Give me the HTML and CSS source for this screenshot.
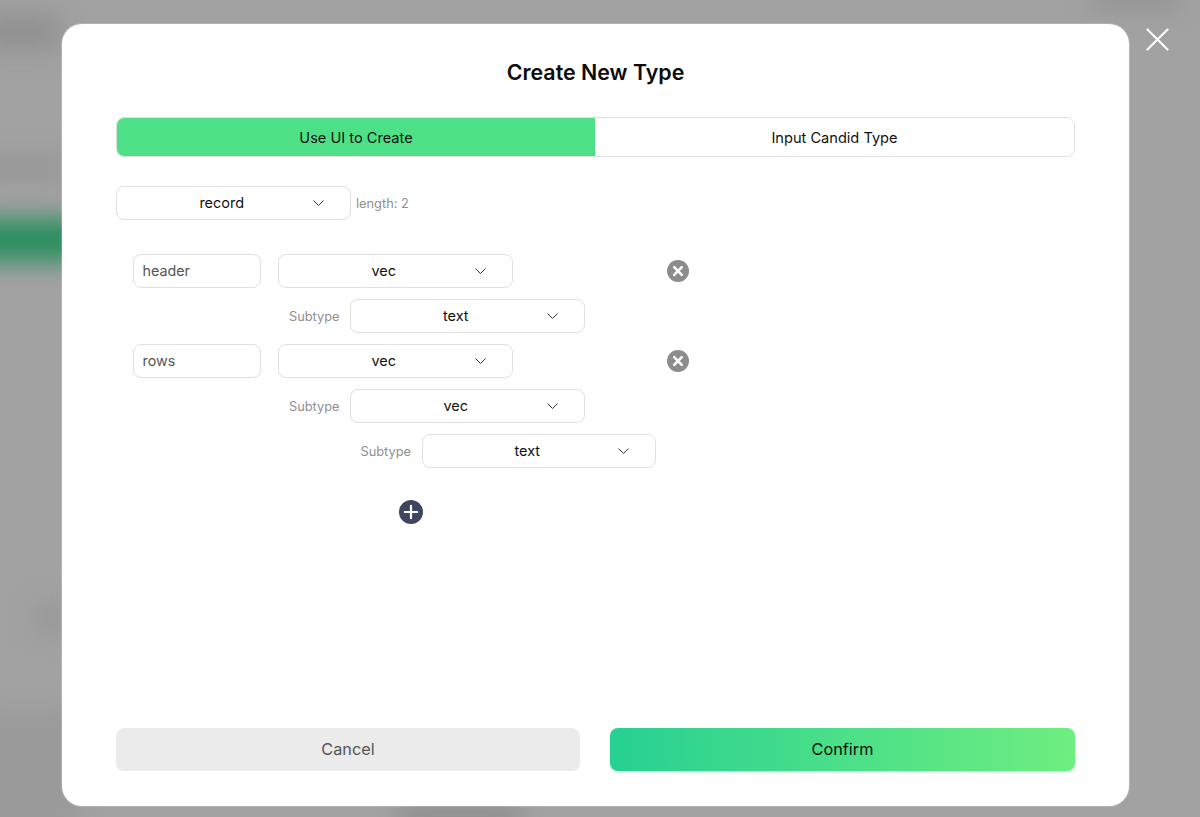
FILE: index.html
```html
<!DOCTYPE html>
<html lang="en">
    <head>
        <meta charset="UTF-8">
        <meta name="viewport" content="width=device-width, initial-scale=1.0">
        <title>Create New Type</title>
        <link rel="stylesheet" href="styles.css">
    </head>
    <body>
        <!-- blurred page behind the modal -->
        <div class="backdrop">
            <div class="blob blob-top"></div>
            <div class="blob blob-corner"></div>
            <div class="blob blob-mid"></div>
            <div class="blob blob-green"></div>
            <div class="blob blob-low"></div>
            <div class="blob blob-foot"></div>
            <div class="blob blob-bottom"></div>
        </div>

        <div class="modal">
            <h1 class="modal-title">Create New Type</h1>

            <div class="tabs">
                <button class="tab tab-active">Use UI to Create</button>
                <button class="tab">Input Candid Type</button>
            </div>

            <div class="type-head">
                <div class="select"><span>record</span><svg class="chevron" viewBox="0 0 11 6"><path d="M.5.5 5.5 5.5 10.5.5"/></svg></div>
                <span class="hint">length: 2</span>
            </div>

            <div class="fields">
                <div class="field-row">
                    <div class="name-input">header</div>
                    <div class="select"><span>vec</span><svg class="chevron" viewBox="0 0 11 6"><path d="M.5.5 5.5 5.5 10.5.5"/></svg></div>
                    <svg class="remove" viewBox="0 0 22 22"><circle cx="11" cy="11" r="11"/><path d="M7.2 7.2l7.6 7.6M14.8 7.2l-7.6 7.6"/></svg>
                </div>
                <div class="sub-row">
                    <span class="sub-label">Subtype</span>
                    <div class="select"><span>text</span><svg class="chevron" viewBox="0 0 11 6"><path d="M.5.5 5.5 5.5 10.5.5"/></svg></div>
                </div>

                <div class="field-row">
                    <div class="name-input">rows</div>
                    <div class="select"><span>vec</span><svg class="chevron" viewBox="0 0 11 6"><path d="M.5.5 5.5 5.5 10.5.5"/></svg></div>
                    <svg class="remove" viewBox="0 0 22 22"><circle cx="11" cy="11" r="11"/><path d="M7.2 7.2l7.6 7.6M14.8 7.2l-7.6 7.6"/></svg>
                </div>
                <div class="sub-row">
                    <span class="sub-label">Subtype</span>
                    <div class="select"><span>vec</span><svg class="chevron" viewBox="0 0 11 6"><path d="M.5.5 5.5 5.5 10.5.5"/></svg></div>
                </div>
                <div class="sub-row sub-row-deep">
                    <span class="sub-label">Subtype</span>
                    <div class="select"><span>text</span><svg class="chevron" viewBox="0 0 11 6"><path d="M.5.5 5.5 5.5 10.5.5"/></svg></div>
                </div>
            </div>

            <svg class="add" viewBox="0 0 24 24"><circle cx="12" cy="12" r="12"/><path d="M12 5.8v12.4M5.8 12h12.4"/></svg>

            <div class="actions">
                <button class="btn btn-cancel">Cancel</button>
                <button class="btn btn-confirm">Confirm</button>
            </div>
        </div>

        <svg class="close" viewBox="0 0 24 24"><path d="M1.5 1.5l21 21M22.5 1.5l-21 21"/></svg>
    </body>
</html>
```

FILE: styles.css
```css
* {
    box-sizing: border-box;
}
html, body {
    margin: 0;
    height: 817px;
    overflow: hidden;
}
body {
    font-family: "Inter", "Liberation Sans", sans-serif;
    font-size: 14.5px;
    color: #111;
    background-color: #a2a2a2;
    padding: 24px 71px 11px 62px;
}
button {
    font-family: inherit;
    cursor: pointer;
}

/* backdrop */
.backdrop {
    position: absolute;
    inset: 0;
    overflow: hidden;
}
.blob {
    position: absolute;
    filter: blur(12px);
}
.blob-top {
    left: -20px;
    top: 14px;
    width: 80px;
    height: 36px;
    background-color: #909090;
}
.blob-corner {
    left: 1090px;
    top: -14px;
    width: 90px;
    height: 24px;
    background-color: #949494;
}
.blob-mid {
    left: -20px;
    top: 156px;
    width: 90px;
    height: 24px;
    background-color: #969696;
}
.blob-green {
    left: -30px;
    top: 218px;
    width: 110px;
    height: 44px;
    background-color: #2b8f5f;
}
.blob-low {
    left: 34px;
    top: 602px;
    width: 36px;
    height: 32px;
    background-color: #989898;
}
.blob-foot {
    left: -20px;
    top: 710px;
    width: 100px;
    height: 130px;
    background-color: #9a9a9a;
}
.blob-bottom {
    left: 400px;
    top: 804px;
    width: 120px;
    height: 24px;
    background-color: #8c8c8c;
}

/* modal */
.modal {
    position: relative;
    height: 782px;
    background-color: #fff;
    border-radius: 20px;
    box-shadow: 0 0 0 1px rgba(255, 255, 255, 0.2);
    padding: 0 54px 35px;
    display: flex;
    flex-direction: column;
}
.modal-title {
    margin: 32px 0 29px;
    font-size: 21.4px;
    line-height: 32px;
    font-weight: 600;
    text-align: center;
    color: #0c0c0c;
}
.close {
    position: absolute;
    left: 1146px;
    top: 28px;
    width: 23px;
    height: 23px;
    fill: none;
    stroke: #fff;
    stroke-width: 2.2;
    stroke-linecap: round;
}

.tabs {
    display: flex;
    height: 40px;
    border: 1px solid #e0e0e0;
    border-radius: 8px;
    overflow: hidden;
}
.tab {
    flex: 1;
    border: none;
    background: #fff;
    font-size: 14.6px;
    color: #111;
    padding: 1px 0 0;
}
.tab-active {
    flex: none;
    width: 478px;
    background-color: #4ee087;
}

.type-head {
    display: flex;
    align-items: center;
    gap: 5.5px;
    margin-top: 29px;
}
.hint, .sub-label {
    font-size: 12.8px;
    color: #8f8f8f;
}

.select {
    position: relative;
    width: 234.5px;
    height: 34px;
    border: 1px solid #e0e0e0;
    border-radius: 8px;
    background: #fff;
    display: flex;
    align-items: center;
    padding: 0 39px 1px 16px;
    font-size: 14.5px;
}
.select span {
    flex: 1;
    text-align: center;
}
.chevron {
    position: absolute;
    right: 26px;
    top: 13px;
    width: 11px;
    height: 6px;
    fill: none;
    stroke: #333;
    stroke-width: 1;
}

.fields {
    display: flex;
    flex-direction: column;
    gap: 11px;
    margin-top: 34px;
    padding-left: 17px;
}
.field-row {
    display: flex;
    align-items: center;
    gap: 17px;
}
.name-input {
    width: 128px;
    height: 34px;
    border: 1px solid #e0e0e0;
    border-radius: 8px;
    padding-left: 8.5px;
    font-size: 14.3px;
    line-height: 32px;
    color: #555;
}
.remove {
    width: 22px;
    height: 22px;
    margin-left: 137px;
}
.remove circle {
    fill: #8c8c8c;
}
.remove path {
    fill: none;
    stroke: #fff;
    stroke-width: 2.6;
    stroke-linecap: round;
}
.sub-row {
    display: flex;
    align-items: center;
    gap: 11px;
    margin-left: 156px;
}
.sub-row-deep {
    margin-left: 227.5px;
}
.sub-label {
    width: 50px;
    white-space: nowrap;
}

.add {
    width: 24px;
    height: 24px;
    margin: 32px 0 0 282.5px;
}
.add circle {
    fill: #3f4560;
}
.add path {
    fill: none;
    stroke: #fff;
    stroke-width: 2.2;
    stroke-linecap: round;
}

.actions {
    display: flex;
    gap: 30px;
    margin-top: auto;
}
.btn {
    height: 43px;
    border: none;
    border-radius: 8px;
    font-size: 16.3px;
    padding: 0 0 1px;
}
.btn-cancel {
    width: 464px;
    background-color: #ebebeb;
    color: #555;
}
.btn-confirm {
    flex: 1;
    background: linear-gradient(90deg, #27d092, #6fee80);
    box-shadow: 0 1px 2px rgba(90, 240, 170, 0.5);
    color: #0c0c0c;
}
```
